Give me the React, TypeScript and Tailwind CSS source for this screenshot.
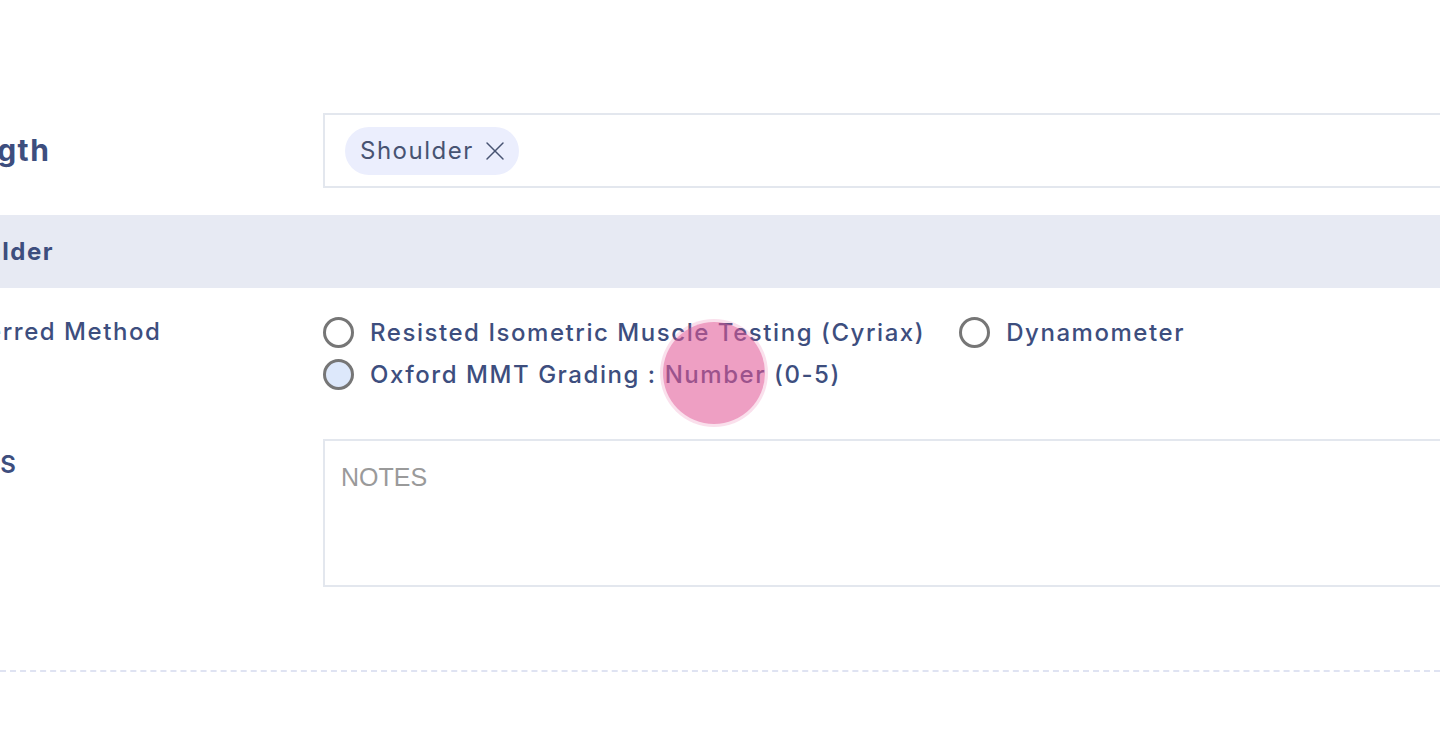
import { X } from "lucide-react";

const navy = "text-[#3d4e7e]";

function RadioOption({ label, checked = false }: { label: string; checked?: boolean }) {
  return (
    <label className="flex items-center gap-4 whitespace-nowrap">
      <span
        className={`w-[31px] h-[31px] rounded-full border-[3px] border-[#767676] shrink-0 ${
          checked ? "bg-[#dde8fb]" : "bg-white"
        }`}
      />
      <span className={`text-[24px] font-medium tracking-[1.55px] ${navy} leading-[30px]`}>{label}</span>
    </label>
  );
}

export default function App() {
  return (
    <div
      className="relative w-full h-[753px] bg-white overflow-hidden"
      style={{ fontFamily: "Inter, 'Noto Sans', sans-serif" }}
    >
      <div className="pt-[113px]">
        {/* Strength */}
        <div className="flex items-center">
          <div className="w-[323px] shrink-0">
            <div className={`-ml-[89px] whitespace-nowrap text-[30px] font-bold tracking-[1.5px] ${navy}`}>
              Strength
            </div>
          </div>
          <div className="flex-1 -mr-[40px] h-[75px] border-2 border-[#e3e7ee] flex items-center px-[20px]">
            <span className="flex items-center gap-[5px] h-[48px] pl-[15px] pr-[8px] rounded-full bg-[#ebeefd] text-[24px] tracking-[1.5px] text-[#475372]">
              Shoulder
              <X size={32} strokeWidth={1.1} />
            </span>
          </div>
        </div>

        {/* Shoulder band */}
        <div className="mt-[27px] h-[73px] bg-[#e7eaf3] flex items-center">
          <div className={`-ml-[64px] whitespace-nowrap text-[24px] font-bold tracking-[1.5px] ${navy}`}>
            Shoulder
          </div>
        </div>

        {/* Preferred method */}
        <div className="flex mt-[29px]">
          <div className="w-[323px] shrink-0">
            <div
              className={`-ml-[66px] whitespace-nowrap text-[24px] font-medium tracking-[1.55px] leading-[30px] ${navy}`}
            >
              Preferred Method
            </div>
          </div>
          <div className="flex flex-col gap-[11px]">
            <div className="flex items-center gap-[34px]">
              <RadioOption label="Resisted Isometric Muscle Testing (Cyriax)" />
              <RadioOption label="Dynamometer" />
            </div>
            <RadioOption label="Oxford MMT Grading : Number (0-5)" checked />
          </div>
        </div>

        {/* Notes */}
        <div className="flex mt-[49px]">
          <div className="w-[323px] shrink-0 pt-[8px]">
            <div className={`-ml-[72px] whitespace-nowrap text-[24px] font-semibold tracking-[1.5px] ${navy}`}>
              NOTES
            </div>
          </div>
          <div
            className="flex-1 -mr-[40px] h-[148px] border-2 border-[#e3e7ee] px-[16px] pt-[18px] text-[25px] text-[#9a9a9a]"
            style={{ fontFamily: "'Liberation Sans', Arial, sans-serif" }}
          >
            NOTES
          </div>
        </div>

        <div className="mt-[83px] border-t-2 border-dashed border-[#dfe3f2]" />
      </div>

      {/* touch indicator */}
      <div className="absolute left-[660px] top-[319px] w-[108px] h-[108px] rounded-full bg-[rgba(232,100,160,0.2)] flex items-center justify-center">
        <div className="w-[102px] h-[102px] rounded-full bg-[rgba(226,86,148,0.47)]" />
      </div>
    </div>
  );
}
